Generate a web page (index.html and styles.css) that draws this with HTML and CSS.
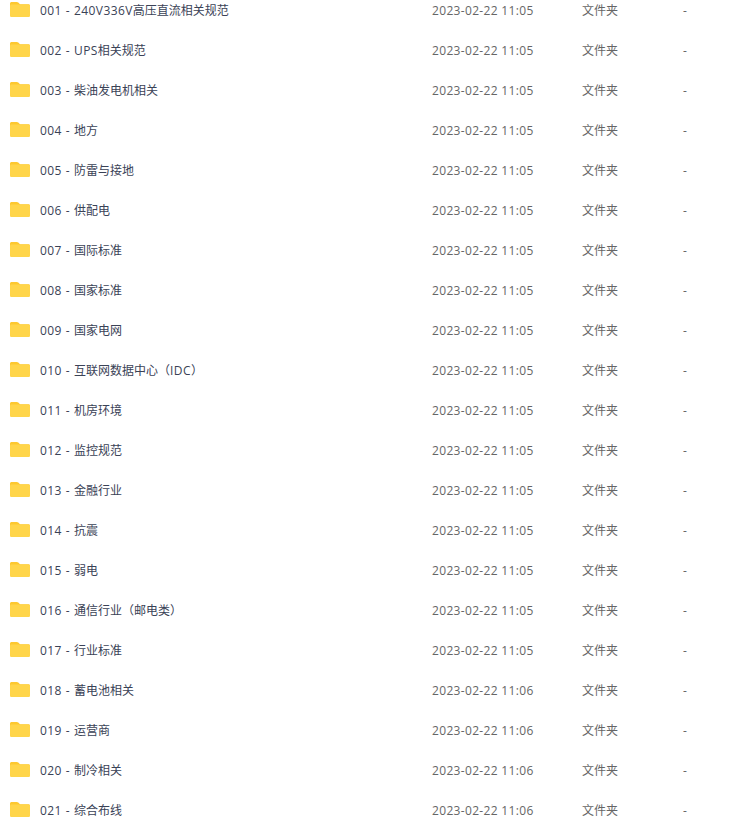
FILE: index.html
```html
<!DOCTYPE html>
<html lang="zh-CN">
<head>
    <meta charset="UTF-8">
    <meta name="viewport" content="width=device-width, initial-scale=1.0">
    <title>文件列表</title>
    <link rel="stylesheet" href="styles.css">
</head>
<body>
    <svg class="defs" width="0" height="0" aria-hidden="true">
        <symbol id="folder" viewBox="0 0 20 15">
            <path fill="#fdc830" d="M1.6 0h5.2c.6 0 1.1.2 1.5.6L10 2.200h8.400c.9 0 1.600.7 1.600 1.600v2H0V1.600C0 .7.7 0 1.600 0z"/>
            <path fill="#ffd54a" d="M1.400 2.400h17.200c.8 0 1.400.6 1.400 1.400v9.600c0 .9-.7 1.600-1.600 1.600H1.600C.7 15 0 14.300 0 13.400V3.800c0-.8.600-1.400 1.400-1.400z"/>
        </symbol>
    </svg>

    <ul class="file-list" id="list"></ul>

    <script>
        var names = [
            ['001 - 240V336V高压直流相关规范', '11:05'],
            ['002 - UPS相关规范', '11:05'],
            ['003 - 柴油发电机相关', '11:05'],
            ['004 - 地方', '11:05'],
            ['005 - 防雷与接地', '11:05'],
            ['006 - 供配电', '11:05'],
            ['007 - 国际标准', '11:05'],
            ['008 - 国家标准', '11:05'],
            ['009 - 国家电网', '11:05'],
            ['010 - 互联网数据中心（IDC）', '11:05'],
            ['011 - 机房环境', '11:05'],
            ['012 - 监控规范', '11:05'],
            ['013 - 金融行业', '11:05'],
            ['014 - 抗震', '11:05'],
            ['015 - 弱电', '11:05'],
            ['016 - 通信行业（邮电类）', '11:05'],
            ['017 - 行业标准', '11:05'],
            ['018 - 蓄电池相关', '11:06'],
            ['019 - 运营商', '11:06'],
            ['020 - 制冷相关', '11:06'],
            ['021 - 综合布线', '11:06']
        ];

        var html = '';
        names.forEach(function (row) {
            var name = row[0].replace(/[\x20-\x7e]+/g, '<span class="latin">$&</span>');
            html += '<li class="file-row">'
                + '<svg class="folder-icon"><use href="#folder"></use></svg>'
                + '<span class="file-name">' + name + '</span>'
                + '<span class="file-date">2023-02-22 ' + row[1] + '</span>'
                + '<span class="file-type">文件夹</span>'
                + '<span class="file-size">-</span>'
                + '</li>';
        });
        document.getElementById('list').innerHTML = html;
    </script>
</body>
</html>
```

FILE: styles.css
```css
html, body {
    height: 100%;
    overflow: hidden;
}

body {
    margin: 0;
    background-color: #fff;
    font-family: "Open Sans", "Noto Sans CJK SC", sans-serif;
    font-size: 12px;
}

.defs {
    display: block;
}

.file-list {
    list-style: none;
    margin: -10px 0 0;
    padding: 0;
}

.file-row {
    display: grid;
    grid-template-columns: 30px 392px 150px 101px 1fr;
    align-items: center;
    height: 40px;
    padding-left: 10px;
}

.folder-icon {
    width: 20px;
    height: 15px;
    margin-top: -1px;
}

.file-name {
    color: #3a4256;
}

.latin {
    letter-spacing: 0.4px;
    word-spacing: 0.5px;
}

.file-date {
    letter-spacing: 0.33px;
}

.file-date,
.file-type,
.file-size {
    color: #666;
}
```
